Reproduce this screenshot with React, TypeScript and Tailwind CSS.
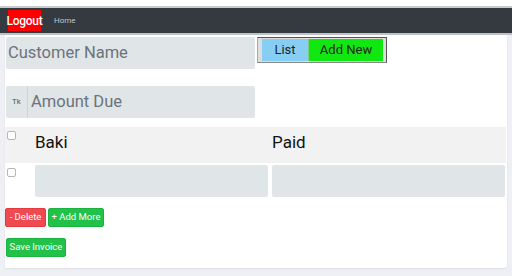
import React from "react";

function Checkbox() {
  return <div className="w-[9px] h-[9px] rounded-[2px] border border-[#b5b5b5] bg-white" />;
}

export default function App() {
  return (
    <div className="w-[512px] h-[276px] bg-[#eef0f5] overflow-hidden" style={{ fontFamily: "Roboto, 'Liberation Sans', sans-serif" }}>
      <div className="h-[6px] bg-white" />
      <div className="h-[2px] bg-[#c9cbcd]" />
      <nav className="h-[25px] bg-[#343a40] flex items-center pl-[8px]">
        <button className="h-[21px] w-[33px] bg-[#ff0000] text-white text-[12px] font-medium flex items-center justify-center tracking-[-0.3px]">
          Logout
        </button>
        <span className="ml-[13px] text-[8px] text-[#c3c6c9]">Home</span>
      </nav>
      <div className="h-[2px] bg-[#bfc2c5]" />
      <div className="ml-[5px] w-[502px] h-[233px] bg-white rounded-br-[3px] shadow-[0_1px_2px_rgba(0,0,0,0.08)] pt-[2px]">
        <div className="flex">
          <div className="ml-[1px] w-[249px] h-[32px] bg-[#e0e5e8] rounded-[2px] flex items-center pl-[2px] text-[16.5px] text-[#6b737a]">
            Customer Name
          </div>
          <div className="ml-[2px] h-[26px] flex border border-[#555] border-l-[#aaa] border-b-[#888] bg-[#ddd] pl-[4px] py-[1px] pr-[3px]">
            <button className="w-[46px] bg-[#87cef5] text-[13px] text-[#222] flex items-center justify-center">List</button>
            <button className="w-[75px] bg-[#11e711] text-[13px] text-[#222] flex items-center justify-center border-l border-[#7fd07f]">Add New</button>
          </div>
        </div>
        <div className="mt-[17px] ml-[1px] w-[249px] h-[32px] bg-[#e0e5e8] rounded-[2px] flex">
          <div className="w-[22px] border-r border-[#cdd3d7] flex items-center justify-center text-[8px] text-[#555]">Tk</div>
          <div className="flex items-center pl-[3px] text-[16.5px] text-[#6b737a]">Amount Due</div>
        </div>
        <div className="mt-[9px] w-[501px] h-[36px] bg-[#f2f2f2] flex">
          <div className="w-[30px] pl-[2px] pt-[4px]"><Checkbox /></div>
          <div className="w-[237px] pt-[3px] text-[17px] text-[#111]">Baki</div>
          <div className="pt-[3px] text-[17px] text-[#111]">Paid</div>
        </div>
        <div className="mt-[2px] w-[501px] h-[32px] flex">
          <div className="w-[30px] pl-[2px] pt-[3px]"><Checkbox /></div>
          <div className="w-[233px] h-[32px] bg-[#e0e5e8] rounded-[2px]" />
          <div className="ml-[4px] w-[233px] h-[32px] bg-[#e0e5e8] rounded-[2px]" />
        </div>
        <div className="mt-[11px] flex gap-[2px]">
          <button className="w-[41px] h-[19px] bg-[#ef4a50] border border-[#e23a40] rounded-[2px] text-white text-[9.5px] flex items-center justify-center">- Delete</button>
          <button className="w-[56px] h-[19px] bg-[#22c14a] border border-[#1bb340] rounded-[2px] text-white text-[9.5px] flex items-center justify-center">+ Add More</button>
        </div>
        <div className="mt-[11px] ml-[1px]">
          <button className="w-[60px] h-[19px] bg-[#22c14a] border border-[#1bb340] rounded-[2px] text-white text-[9.5px] flex items-center justify-center">Save Invoice</button>
        </div>
      </div>
    </div>
  );
}
